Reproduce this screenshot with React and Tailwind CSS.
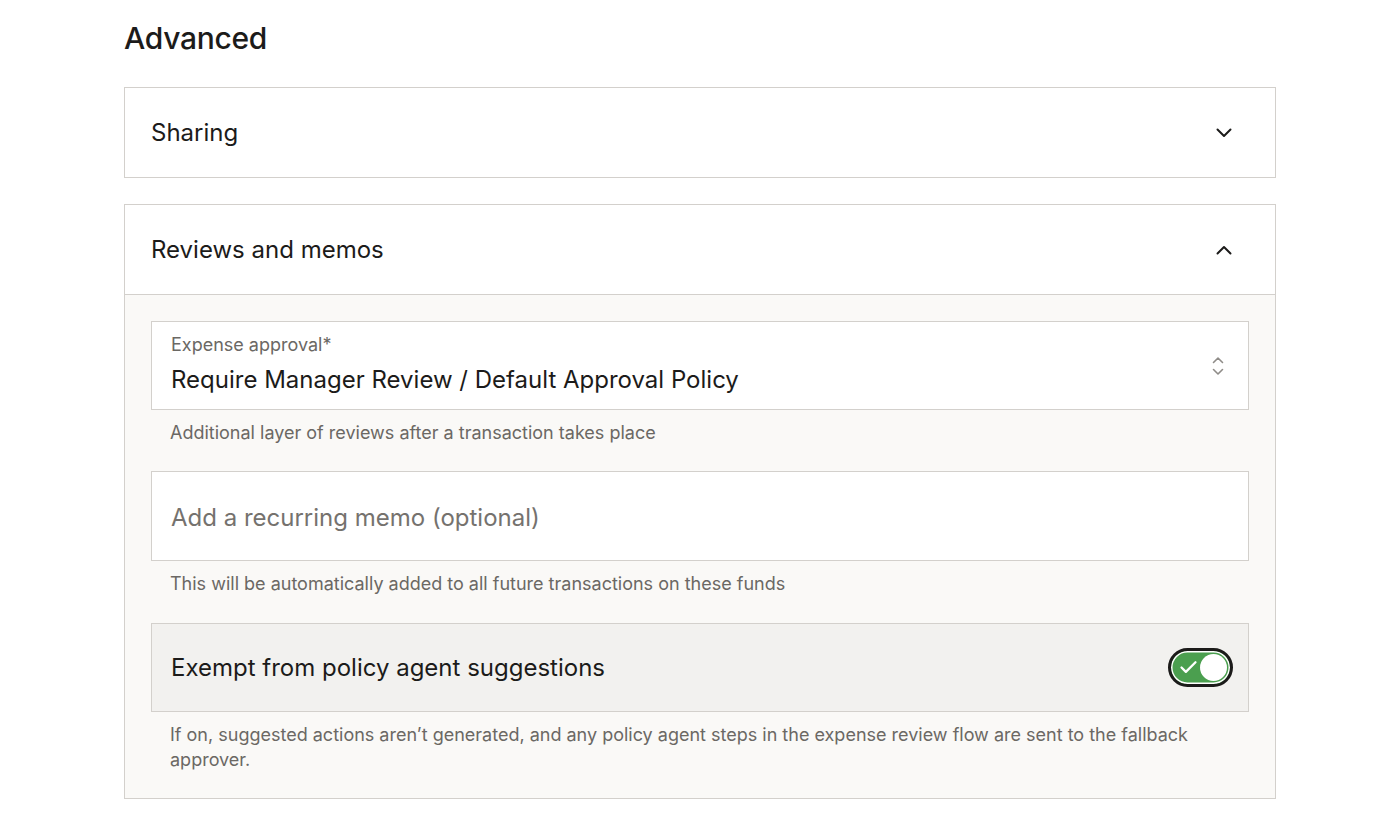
import { Check } from 'lucide-react'

function Chevron({ up }) {
  return (
    <svg width="16" height="10" viewBox="0 0 16 10" fill="none" stroke="#1c1b1a" strokeWidth="2" strokeLinecap="round" strokeLinejoin="round">
      <path d={up ? 'M1.5 8.5L8 2l6.5 6.5' : 'M1.5 1.5L8 8l6.5-6.5'} />
    </svg>
  )
}

function Helper({ children }) {
  return <p className="pl-[19px] pr-[40px] pt-[10px] text-[18px] leading-[25px] text-[#6b6864]">{children}</p>
}

export default function App() {
  return (
    <div className="min-h-screen bg-white font-['Inter',sans-serif] text-[#1c1b1a]">
      <div className="w-[1276px] pl-[124px] pt-[18px]">
        <h1 className="text-[30px] leading-[40px] font-medium tracking-[-0.3px]">Advanced</h1>

        {/* Sharing */}
        <div className="mt-[29px] border border-[#d3d0cc] bg-white">
          <button className="flex h-[89px] w-full items-center justify-between pl-[26px] pr-[43px] text-left">
            <span className="text-[24px]">Sharing</span>
            <Chevron />
          </button>
        </div>

        {/* Reviews and memos */}
        <div className="mt-[26px] border border-[#d3d0cc] bg-[#faf9f7]">
          <button className="flex h-[90px] w-full items-center justify-between border-b border-[#d3d0cc] bg-white pl-[26px] pr-[43px] text-left">
            <span className="text-[24px]">Reviews and memos</span>
            <Chevron up />
          </button>

          <div className="px-[26px] pt-[26px] pb-[26px]">
            <div className="flex h-[89px] items-center justify-between border border-[#d3d0cc] bg-white pl-[19px] pr-[24px]">
              <div className="self-start pt-[12px]">
                <div className="text-[18px] leading-[22px] text-[#6b6864]">Expense approval*</div>
                <div className="mt-[8px] text-[24px] leading-[32px]">Require Manager Review / Default Approval Policy</div>
              </div>
              <svg width="12" height="20" viewBox="0 0 12 20" fill="none" stroke="#8f8c88" strokeWidth="1.6" strokeLinecap="round" strokeLinejoin="round">
                <path d="M1.5 6.5L6 2l4.5 4.5" />
                <path d="M1.5 13.5L6 18l4.5-4.5" />
              </svg>
            </div>
            <Helper>Additional layer of reviews after a transaction takes place</Helper>

            <div className="mt-[26px] flex h-[90px] items-center border border-[#d3d0cc] bg-white pl-[19px] pt-[3px]">
              <span className="text-[24px] text-[#75726e]">Add a recurring memo (optional)</span>
            </div>
            <Helper>This will be automatically added to all future transactions on these funds</Helper>

            <div className="mt-[27px] flex h-[89px] items-center justify-between border border-[#d3d0cc] bg-[#f2f1ef] pl-[19px] pr-[15px]">
              <span className="text-[24px]">Exempt from policy agent suggestions</span>
              <div className="flex h-[39px] w-[65px] items-center justify-between rounded-full border-[3px] border-[#1c1b1a] bg-[#4b9f4f] pl-[7px] pr-[3px] shadow-[inset_0_0_0_1.5px_white]">
                <Check size={21} strokeWidth={2.6} color="white" />
                <div className="h-[27px] w-[27px] rounded-full bg-white" />
              </div>
            </div>
            <Helper>
              If on, suggested actions aren’t generated, and any policy agent steps in the expense review flow are sent to the fallback approver.
            </Helper>
          </div>
        </div>
      </div>
    </div>
  )
}
